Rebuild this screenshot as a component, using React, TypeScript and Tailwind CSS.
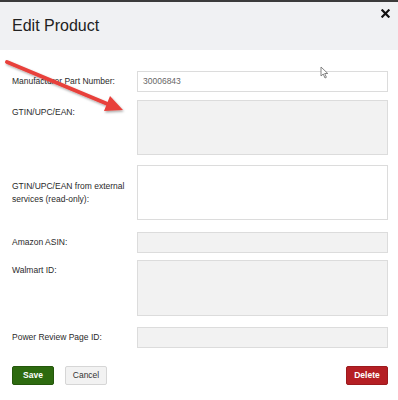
const font = { fontFamily: '"Liberation Sans", Arial, sans-serif' }

type Row = {
  label: string[]
  h: string
  filled: boolean
  value?: string
  mt: string
  labelPt: string
}

const rows: Row[] = [
  { label: ['Manufacturer Part Number:'], h: 'h-[21px]', filled: false, value: '30006843', mt: 'mt-[21px]', labelPt: 'pt-[4px]' },
  { label: ['GTIN/UPC/EAN:'], h: 'h-[55px]', filled: true, mt: 'mt-[8px]', labelPt: 'pt-[6px]' },
  { label: ['GTIN/UPC/EAN from external', 'services (read-only):'], h: 'h-[55px]', filled: false, mt: 'mt-[10px]', labelPt: 'pt-[15px]' },
  { label: ['Amazon ASIN:'], h: 'h-[21px]', filled: true, mt: 'mt-[12px]', labelPt: 'pt-[4px]' },
  { label: ['Walmart ID:'], h: 'h-[56px]', filled: true, mt: 'mt-[7px]', labelPt: 'pt-[4px]' },
  { label: ['Power Review Page ID:'], h: 'h-[21px]', filled: true, mt: 'mt-[11px]', labelPt: 'pt-[4px]' },
]

export default function App() {
  return (
    <div className="relative w-[398px] h-[400px] bg-white overflow-hidden" style={font}>
      <div className="h-[2px] bg-[#3b3b3b]" />
      <div className="relative h-[48px] bg-[#f0f1f3] flex items-center pl-[12px]">
        <h1 className="text-[16px] text-[#222] leading-none mt-[-1px]">Edit Product</h1>
        <svg className="absolute right-[8px] top-[7px]" width="9" height="9" viewBox="0 0 10 10">
          <path d="M1.5 1.5 L8.5 8.5 M8.5 1.5 L1.5 8.5" stroke="#111" strokeWidth="2.4" strokeLinecap="square" />
        </svg>
      </div>

      <div className="pl-[12px] pr-[10px]">
        {rows.map((r) => (
          <div key={r.label[0]} className={`flex ${r.mt}`}>
            <div className={`w-[125px] shrink-0 text-[8.5px] leading-[13px] text-[#2a2a2a] ${r.labelPt}`}>
              {r.label.map((l) => (
                <div key={l}>{l}</div>
              ))}
            </div>
            <div
              className={`flex-1 border border-[#dcdcdc] ${r.filled ? 'bg-[#f2f2f2]' : 'bg-white'} ${r.h} flex items-start px-[5px]`}
            >
              {r.value && <span className="text-[8.5px] text-[#666] leading-[19px]">{r.value}</span>}
            </div>
          </div>
        ))}

        <div className="flex items-center mt-[18px]">
          <button className="w-[42px] h-[19px] bg-[#2d6a0f] border border-[#24570b] rounded-[2px] text-white text-[8.5px] font-bold">
            Save
          </button>
          <button className="ml-[11px] w-[42px] h-[19px] bg-[#f2f2f2] border border-[#d6d6d6] rounded-[2px] text-[#333] text-[8.5px]">
            Cancel
          </button>
          <button className="ml-auto w-[42px] h-[19px] bg-[#b51f24] border border-[#9c1a1e] rounded-[2px] text-white text-[8.5px] font-bold">
            Delete
          </button>
        </div>
      </div>

      {/* annotation arrow */}
      <svg className="absolute left-0 top-0 pointer-events-none" width="140" height="130" viewBox="0 0 140 130">
        <defs>
          <filter id="sh" x="-20%" y="-20%" width="140%" height="140%">
            <feDropShadow dx="1" dy="1.5" stdDeviation="1.2" floodColor="#000" floodOpacity="0.35" />
          </filter>
        </defs>
        <g filter="url(#sh)">
          <line x1="7" y1="62" x2="110" y2="105" stroke="#e8403a" strokeWidth="4" strokeLinecap="round" />
          <polygon points="123,110 104,111 110,96" fill="#e8403a" />
        </g>
      </svg>

      {/* mouse cursor */}
      <svg className="absolute left-[320px] top-[66px]" width="9" height="13" viewBox="0 0 9 13">
        <path d="M1 1 L1 10 L3.2 8 L5 12 L6.4 11.3 L4.7 7.5 L7.8 7.5 Z" fill="#fff" stroke="#777" strokeWidth="0.9" strokeLinejoin="round" />
      </svg>
    </div>
  )
}
